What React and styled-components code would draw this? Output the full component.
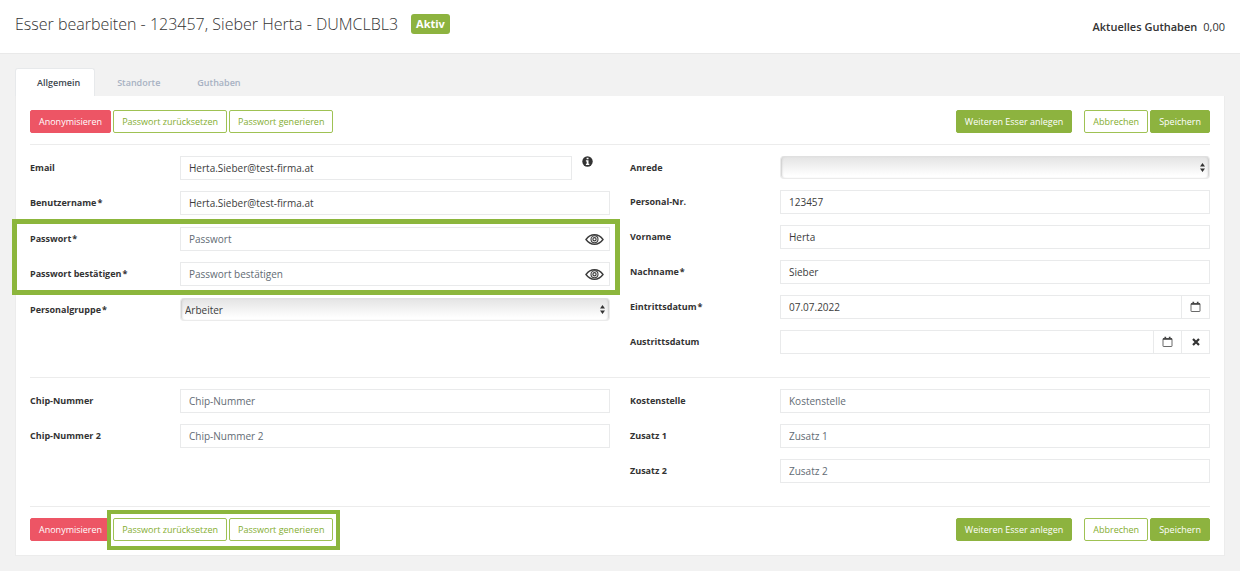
import React, { useState } from 'react'
import styled, { createGlobalStyle, css } from 'styled-components'

const GlobalStyle = createGlobalStyle`
    *, *::before, *::after {
        box-sizing: border-box;
    }
    body {
        margin: 0;
        background: #fff;
        color: #3c3c3c;
        font-family: 'Open Sans', 'Noto Sans', sans-serif;
        font-size: 11px;
    }
    button, input, select {
        font-family: inherit;
        color: inherit;
    }
`

const Header = styled.header`
    display: flex;
    justify-content: space-between;
    align-items: center;
    height: 53px;
    padding: 0 15px;
    background: #fff;
`

const TitleGroup = styled.div`
    display: flex;
    align-items: center;
    gap: 13px;
    padding-bottom: 6px;
`

const Title = styled.h1`
    margin: 0;
    font-size: 16px;
    line-height: 24px;
    font-weight: 300;
    color: #333;
`

const Badge = styled.span`
    padding: 0 5px;
    border-radius: 3px;
    background: #8db33f;
    color: #fff;
    font-size: 11px;
    font-weight: 700;
    line-height: 20px;
`

const Balance = styled.div`
    display: flex;
    gap: 6px;
    font-size: 11px;
    line-height: 18px;
    color: #333;
`

const BalanceLabel = styled.span`
    font-weight: 600;
`

const Page = styled.main`
    padding: 14px 15px 15px;
    border-top: 1px solid #e9e9e9;
    background: #f2f2f2;
`

const Tabs = styled.nav`
    display: flex;
`

const Tab = styled.button`
    height: 28px;
    padding: 0 14px 0 21px;
    border: 1px solid ${(props) => (props.$active ? '#e7e9eb' : 'transparent')};
    border-bottom: none;
    border-radius: 3px 3px 0 0;
    background: ${(props) => (props.$active ? '#fff' : 'transparent')};
    color: ${(props) => (props.$active ? '#40474f' : '#a7b1c2')};
    font-size: 9px;
    font-weight: 600;
    cursor: pointer;
`

const Card = styled.form`
    padding: 14px;
    border: 1px solid #ececec;
    border-top: none;
    background: #fff;
`

const Toolbar = styled.div`
    display: flex;
    justify-content: space-between;
`

const ButtonGroup = styled.div`
    display: flex;
    gap: ${(props) => (props.$wide ? 12 : 2)}px;
`

const colors = {
    danger: css`
        border-color: #ed5565;
        background: #ed5565;
        color: #fff;
    `,
    primary: css`
        border-color: #8db33f;
        background: #8db33f;
        color: #fff;
    `,
    outline: css`
        border-color: #9fc254;
        background: #fff;
        color: #84ad30;
    `,
}

const Button = styled.button`
    height: 23px;
    padding: 0 8px;
    border: 1px solid;
    border-radius: 2px;
    font-size: 9px;
    line-height: 21px;
    white-space: nowrap;
    cursor: pointer;
    ${(props) => colors[props.$kind]}
`

const Marked = styled.div`
    position: relative;
    ${(props) =>
        props.$on &&
        css`
            &::after {
                content: '';
                position: absolute;
                inset: ${props.$inset};
                border: ${props.$thick}px solid #8cb63c;
                pointer-events: none;
            }
        `}
`

const Section = styled.section`
    display: grid;
    grid-template-columns: 1fr 1fr;
    gap: 20px;
    margin-top: ${(props) => (props.$first ? 11 : 0)}px;
    padding: 11px 0 23px;
    border-top: 1px solid #ececec;
`

const Footer = styled.footer`
    padding-top: 11px;
    border-top: 1px solid #ececec;
`

const Column = styled.div`
    display: flex;
    flex-direction: column;
    gap: 11px;
`

const FieldPair = styled(Marked)`
    display: flex;
    flex-direction: column;
    gap: 11px;
    margin: 1px 0;
`

const Row = styled.div`
    display: grid;
    grid-template-columns: 150px 1fr;
`

const Label = styled.label`
    font-size: 9px;
    font-weight: 700;
    line-height: 23px;
    color: #333;
`

const Required = styled.span`
    margin-left: 1px;
`

const Control = styled.div`
    position: relative;
    display: flex;
    min-width: 0;
`

const Input = styled.input`
    flex: 1;
    min-width: 0;
    height: 24px;
    padding: 0 8px;
    border: 1px solid #e9eaeb;
    border-radius: 0;
    background: #fff;
    font-size: 10px;
    outline: none;
    &::placeholder {
        color: #626b74;
        opacity: 1;
    }
`

const Select = styled.select`
    flex: 1;
    height: 23px;
    padding: 0 4px;
    border: 1px solid #ebebeb;
    border-top-color: #e0e0e0;
    border-radius: 4px;
    appearance: none;
    background: linear-gradient(#e4e4e4, #fff 90%);
    box-shadow: inset 2px 0 2px -1px #ccc, inset -2px 0 2px -1px #ccc;
    font-size: 10px;
`

const SelectArrows = styled.svg`
    position: absolute;
    right: 5px;
    top: 7px;
    pointer-events: none;
`

const AddonButton = styled.button`
    display: flex;
    align-items: center;
    justify-content: center;
    width: 29px;
    height: 24px;
    margin-left: -1px;
    padding: 0;
    border: 1px solid #e9eaeb;
    background: #fff;
    cursor: pointer;
`

const EyeButton = styled.button`
    position: absolute;
    right: 6px;
    top: 6px;
    display: flex;
    padding: 0;
    border: none;
    background: none;
    cursor: pointer;
`

const Info = styled.span`
    width: 38px;
    padding-left: 10px;
    line-height: 0;
`

const EyeIcon = () => (
    <svg width="19" height="13" viewBox="0 0 19 13" fill="none" stroke="#3c3c3c">
        <path d="M1 6.500C3.400 3.200 6.200 1.800 9.500 1.800s6.100 1.400 8.500 4.700c-2.400 3.300-5.200 4.700-8.500 4.700S3.400 9.800 1 6.500Z" strokeWidth="1.400" />
        <circle cx="9.500" cy="6.300" r="3.500" strokeWidth="1.100" />
        <circle cx="9.500" cy="6.300" r="1.600" strokeWidth="1.200" />
    </svg>
)

const CalendarIcon = () => (
    <svg width="11" height="12" viewBox="0 0 11 12" fill="none" stroke="#444">
        <rect x="1" y="2.500" width="9" height="8" rx=".5" strokeWidth=".8" />
        <path d="M1 3h9" strokeWidth="1.600" />
        <path d="M3.300 .8v2M7.700 .8v2" strokeWidth="1.700" />
    </svg>
)

const CloseIcon = () => (
    <svg width="8" height="8" viewBox="0 0 8 8" stroke="#333" strokeWidth="2.200">
        <path d="M1 1l6 6M7 1L1 7" />
    </svg>
)

const InfoIcon = () => (
    <svg width="11" height="11" viewBox="0 0 11 11">
        <circle cx="5.500" cy="5.500" r="5.200" fill="#333" />
        <path d="M4.600 1.700h1.900v1.500H4.600zM3.900 4.200h2.600v3.500h.8v1.200H3.900V7.700h.8V5.400h-.8z" fill="#fff" />
    </svg>
)

const FieldLabel = ({ id, label, required }) => (
    <Label htmlFor={id}>
        {label}
        {required && <Required>*</Required>}
    </Label>
)

const TextField = ({ id, label, required, value, placeholder, type = 'text', info, children }) => {
    const [text, setText] = useState(value || '')
    return (
        <Row>
            <FieldLabel id={id} label={label} required={required} />
            <Control>
                <Input
                    id={id}
                    type={type}
                    value={text}
                    placeholder={placeholder}
                    onChange={(e) => setText(e.target.value)}
                />
                {info && <Info><InfoIcon /></Info>}
                {children}
            </Control>
        </Row>
    )
}

const PasswordField = ({ id, label, placeholder }) => {
    const [visible, setVisible] = useState(false)
    return (
        <TextField id={id} label={label} required placeholder={placeholder} type={visible ? 'text' : 'password'}>
            <EyeButton type="button" onClick={() => setVisible(!visible)}>
                <EyeIcon />
            </EyeButton>
        </TextField>
    )
}

const SelectField = ({ id, label, required, options }) => (
    <Row>
        <FieldLabel id={id} label={label} required={required} />
        <Control>
            <Select id={id}>
                {options.map((option) => (
                    <option key={option}>{option}</option>
                ))}
            </Select>
            <SelectArrows width="5" height="9" viewBox="0 0 5 9" fill="#333">
                <path d="M2.500 0L5 3.600H0zM2.500 9L0 5.400h5z" />
            </SelectArrows>
        </Control>
    </Row>
)

const Actions = ({ marked }) => (
    <Toolbar>
        <ButtonGroup>
            <Button type="button" $kind="danger">Anonymisieren</Button>
            <Marked $on={marked} $inset="-8px -7px -9px -6px" $thick={4}>
                <ButtonGroup>
                    <Button type="button" $kind="outline">Passwort zurücksetzen</Button>
                    <Button type="button" $kind="outline">Passwort generieren</Button>
                </ButtonGroup>
            </Marked>
        </ButtonGroup>
        <ButtonGroup $wide>
            <Button type="button" $kind="primary">Weiteren Esser anlegen</Button>
            <ButtonGroup>
                <Button type="button" $kind="outline">Abbrechen</Button>
                <Button type="button" $kind="primary">Speichern</Button>
            </ButtonGroup>
        </ButtonGroup>
    </Toolbar>
)

const tabs = ['Allgemein', 'Standorte', 'Guthaben']

const App = () => {
    const [active, setActive] = useState('Allgemein')

    return (
        <>
            <GlobalStyle />
            <Header>
                <TitleGroup>
                    <Title>Esser bearbeiten - 123457, Sieber Herta - DUMCLBL3</Title>
                    <Badge>Aktiv</Badge>
                </TitleGroup>
                <Balance>
                    <BalanceLabel>Aktuelles Guthaben</BalanceLabel>
                    <span>0,00</span>
                </Balance>
            </Header>
            <Page>
                <Tabs>
                    {tabs.map((tab) => (
                        <Tab key={tab} type="button" $active={tab === active} onClick={() => setActive(tab)}>
                            {tab}
                        </Tab>
                    ))}
                </Tabs>
                <Card onSubmit={(e) => e.preventDefault()}>
                    <Actions />
                    <Section $first>
                        <Column>
                            <TextField id="email" label="Email" value="Herta.Sieber@test-firma.at" info />
                            <TextField id="user" label="Benutzername" required value="Herta.Sieber@test-firma.at" />
                            <FieldPair $on $inset="-8px -10px -9px -18px" $thick={5}>
                                <PasswordField id="pw" label="Passwort" placeholder="Passwort" />
                                <PasswordField id="pw2" label="Passwort bestätigen" placeholder="Passwort bestätigen" />
                            </FieldPair>
                            <SelectField id="group" label="Personalgruppe" required options={['Arbeiter']} />
                        </Column>
                        <Column>
                            <SelectField id="title" label="Anrede" options={['']} />
                            <TextField id="number" label="Personal-Nr." value="123457" />
                            <TextField id="first" label="Vorname" value="Herta" />
                            <TextField id="last" label="Nachname" required value="Sieber" />
                            <TextField id="entry" label="Eintrittsdatum" required value="07.07.2022">
                                <AddonButton type="button"><CalendarIcon /></AddonButton>
                            </TextField>
                            <TextField id="exit" label="Austrittsdatum">
                                <AddonButton type="button"><CalendarIcon /></AddonButton>
                                <AddonButton type="button"><CloseIcon /></AddonButton>
                            </TextField>
                        </Column>
                    </Section>
                    <Section>
                        <Column>
                            <TextField id="chip" label="Chip-Nummer" placeholder="Chip-Nummer" />
                            <TextField id="chip2" label="Chip-Nummer 2" placeholder="Chip-Nummer 2" />
                        </Column>
                        <Column>
                            <TextField id="cost" label="Kostenstelle" placeholder="Kostenstelle" />
                            <TextField id="extra1" label="Zusatz 1" placeholder="Zusatz 1" />
                            <TextField id="extra2" label="Zusatz 2" placeholder="Zusatz 2" />
                        </Column>
                    </Section>
                    <Footer>
                        <Actions marked />
                    </Footer>
                </Card>
            </Page>
        </>
    )
}

export default App
